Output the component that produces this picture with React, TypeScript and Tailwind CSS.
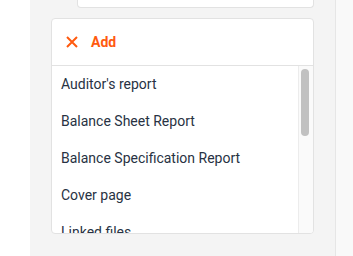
const items = ["Auditor's report", 'Balance Sheet Report', 'Balance Specification Report', 'Cover page', 'Linked files']

export default function App() {
  return (
    <div className="flex h-[256px] w-[353px] overflow-hidden bg-white font-['Roboto',sans-serif]">
      <div className="w-[30px] shrink-0 bg-white" />

      <div className="flex flex-1 flex-col bg-[#f4f4f4] px-[21px]">
        <div className="ml-[26px] h-[8px] rounded-b-[4px] border border-t-0 border-[#e2e2e2] bg-white" />

        <div className="mt-[10px] flex h-[216px] flex-col overflow-hidden rounded-[4px] border border-[#e2e2e2] bg-white">
          <div className="flex h-[47px] shrink-0 items-center gap-[13px] border-b border-[#e2e2e2] pl-[14px] text-[#ff5a0f]">
            <svg width="12" height="12" viewBox="0 0 12 12" fill="none" stroke="currentColor" strokeWidth="2">
              <path d="M1 1 L11 11 M11 1 L1 11" />
            </svg>
            <span className="text-[14px] font-bold">Add</span>
          </div>

          <div className="flex min-h-0 flex-1">
            <ul className="min-w-0 flex-1 overflow-hidden">
              {items.map((item) => (
                <li key={item} className="flex h-[37px] items-center pl-[9px] text-[14px] text-[#283243]">
                  {item}
                </li>
              ))}
            </ul>
            <div className="w-[15px] shrink-0 border-l border-[#ececec] bg-[#fafafa] pt-[3px] pl-[2px]">
              <div className="h-[67px] w-[8px] rounded-full bg-[#c1c1c1]" />
            </div>
          </div>
        </div>
      </div>

      <div className="w-[18px] shrink-0 border-l border-[#e6e6e6] bg-[#f9f9f9]" />
    </div>
  )
}
